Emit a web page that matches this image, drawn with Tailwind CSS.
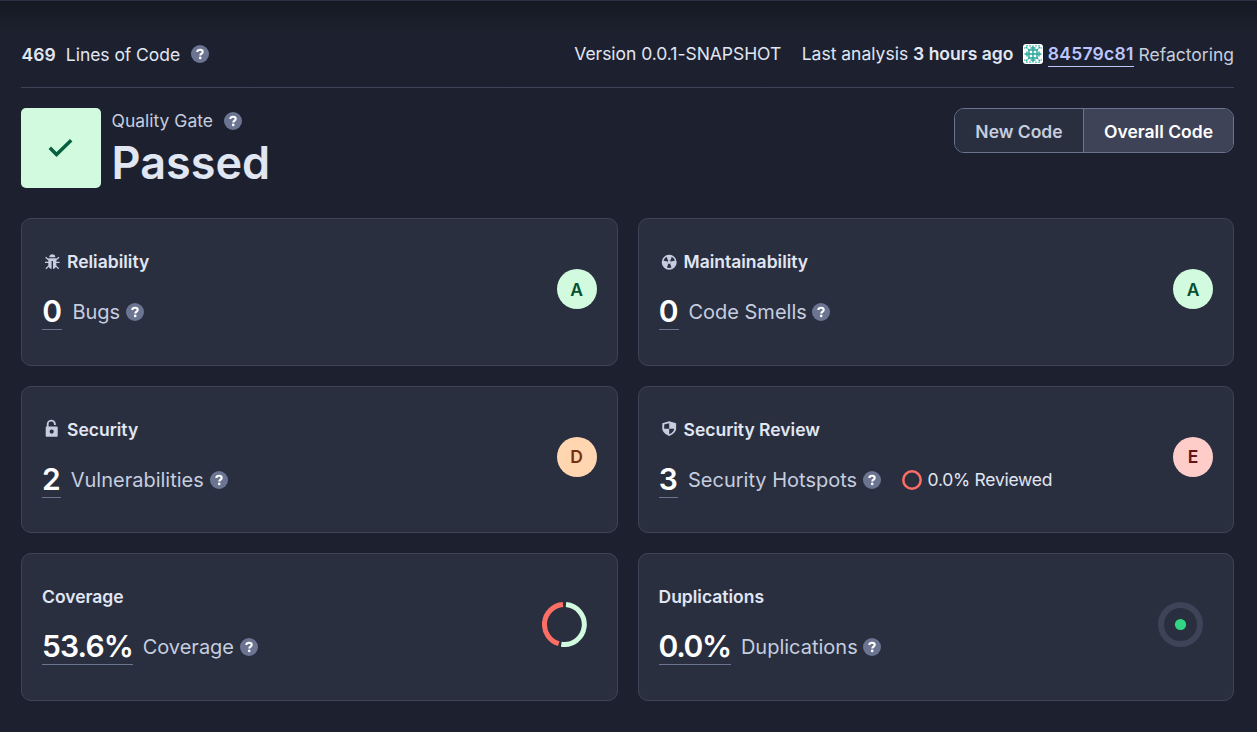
<!DOCTYPE html>
<html lang="en">
<head>
<meta charset="utf-8">
<title>Project overview</title>
<script src="https://cdn.jsdelivr.net/npm/@tailwindcss/browser@4"></script>
</head>
<body class="h-[732px] overflow-hidden bg-[#1d212f] font-['Inter',sans-serif] text-[17.5px] leading-[25px] text-[#e1e6f3]">
<svg class="hidden">
  <symbol id="help" viewBox="0 0 18 18"><circle cx="9" cy="9" r="9" fill="#6b7592"/><path d="M6.3 7.1C6.3 5.5 7.4 4.7 9 4.7s2.7.8 2.7 2.2c0 1.7-2.4 1.8-2.4 3.7" fill="none" stroke="#fff" stroke-width="2.1"/><circle cx="9.2" cy="12.9" r="1.3" fill="#fff"/></symbol>
</svg>
<div class="h-full border-t border-[#2a3146] bg-linear-to-b from-[#161922] to-[#1d212f] to-[32px] pl-[21px] pr-[23px]">
  <header class="flex h-[87px] items-center justify-between border-b border-[#3e4357] pt-[20px]">
    <div class="flex items-center">
      <span class="ml-[0.5px] font-semibold tracking-[0.1px]">469</span><span class="ml-[10px] tracking-[-0.05px]">Lines of Code</span>
      <svg class="ml-[10.500px] size-[18px]"><use href="#help"/></svg>
    </div>
    <div class="flex items-center whitespace-nowrap">
      <span class="mb-[2px] tracking-[-0.04px]">Version 0.0.1-SNAPSHOT</span>
      <span class="mb-[2px] ml-[20.500px]">Last analysis <b class="font-semibold">3 hours ago</b></span>
      <svg class="ml-[9.500px] size-[20px] rounded-[3px] bg-white" viewBox="0 0 20 20" fill="none" stroke="#26a69a"><path d="M6 6h8v8H6zM10 4.500v11M4.500 10h11" stroke-width="1.400"/><path d="M4 7.500v5M16 7.500v5M7.500 4h5M7.500 16h5M5 5l1 1M15 5l-1 1M5 15l1-1M15 15l-1-1M10 1.500v3M10 15.500v3M1.500 10h3M15.500 10h3" stroke-width="1.400"/><path d="M1 4h1.500M4 1v1.500M19 4h-1.500M16 1v1.500M1 16h1.500M4 19v-1.500M19 16h-1.500M16 19v-1.500M3 3l1.500 1.500M17 3l-1.500 1.500M3 17l1.500-1.500M17 17l-1.500-1.500M7 1v1.500M13 1v1.500M7 17.500V19M13 17.500V19" stroke-width="1.200"/></svg>
      <a class="mb-px ml-[5px] border-b border-[#bdc6ff] font-semibold tracking-[0.24px] text-[#bdc6ff]">84579c81</a>
      <span class="ml-[5px] text-[#c5cddf]">Refactoring</span>
    </div>
  </header>

  <section class="flex h-[130px] items-start justify-between pt-[20px]">
    <div class="flex">
      <div class="flex size-[80px] items-center justify-center rounded-[5px] bg-[#d1fadf]">
        <svg class="size-[26px]" viewBox="0 0 26 26"><path d="M1.800 12.800 8.500 19.500 23.200 5.300" fill="none" stroke="#056040" stroke-width="3.500"/></svg>
      </div>
      <div class="ml-[10.500px]">
        <div class="flex items-center text-[#c5cddf]">Quality Gate<svg class="ml-[10.500px] size-[18px]"><use href="#help"/></svg></div>
        <div class="text-[45px] leading-[60px] font-semibold">Passed</div>
      </div>
    </div>
    <div class="flex h-[45px] overflow-hidden rounded-[10px] border border-[#6b7592] font-semibold">
      <div class="flex w-[129px] items-center justify-center border-r border-[#6b7592] bg-[#2a2f40] pt-[2px] text-[#c5cddf]">New Code</div>
      <div class="flex w-[149px] items-center justify-center bg-[#3e4357] pt-[2px] text-white">Overall Code</div>
    </div>
  </section>

  <main class="grid auto-rows-[147.5px] grid-cols-2 gap-[20px]">
    <article class="flex justify-between rounded-[10px] border border-[#3e4357] bg-[#2a2f40] pl-[20px] pr-[20px]">
      <div class="pt-[30px]">
        <h2 class="flex h-[25px] items-center font-semibold"><svg class="mr-[5px] size-[20px]" viewBox="0 0 20 20" fill="#c5cddf"><path d="M7.300 5.300a3 3 0 0 1 6 0zM6.300 6.300h8v6.800c0 2-1 3.600-3.300 4V9H9.600v8.100C7.300 16.700 6.300 15.100 6.300 13.100z"/><path d="M3.600 5.200 6.800 8M17 5.200 13.800 8M3 10.300h4M17.600 10.300h-4M3.900 16.700l3.200-3.100M16.700 16.700l-3.200-3.100" stroke="#c5cddf" stroke-width="1.300"/></svg>Reliability</h2>
        <div class="mt-[17px] flex h-[39px] items-center"><a class="h-[39px] border-b border-[#6b7592] px-[0.3px] text-[30px] leading-[41px] font-semibold text-white">0</a><span class="mt-[4px] ml-[10px] text-[20px] text-[#c5cddf]">Bugs</span><svg class="mt-[2px] ml-[6px] size-[18px]"><use href="#help"/></svg></div>
      </div>
      <div class="mt-[50px] flex size-[40px] items-center justify-center rounded-full bg-[#d1fadf] font-semibold text-[#054f31]">A</div>
    </article>

    <article class="flex justify-between rounded-[10px] border border-[#3e4357] bg-[#2a2f40] pl-[20px] pr-[20px]">
      <div class="pt-[30px]">
        <h2 class="flex h-[25px] items-center font-semibold"><svg class="mr-[5px] size-[20px]" viewBox="0 0 20 20"><circle cx="10.200" cy="10.200" r="6.700" fill="none" stroke="#c5cddf" stroke-width="1.600"/><circle cx="10.200" cy="10.200" r="1.700" fill="#c5cddf"/><path d="M8.400 9.400 3.900 8.500A6.500 6.500 0 0 0 7.700 16.200L9.200 11.900zM12 9.400l4.500-.9a6.500 6.500 0 0 1-3.800 7.700l-1.500-4.300zM9 8.700 7.500 4.200a6.500 6.500 0 0 1 5.400 0L11.400 8.700z" fill="#c5cddf"/></svg>Maintainability</h2>
        <div class="mt-[17px] flex h-[39px] items-center"><a class="h-[39px] border-b border-[#6b7592] px-[0.3px] text-[30px] leading-[41px] font-semibold text-white">0</a><span class="mt-[4px] ml-[9.500px] text-[20px] text-[#c5cddf]">Code Smells</span><svg class="mt-[2px] ml-[5px] size-[18px]"><use href="#help"/></svg></div>
      </div>
      <div class="mt-[50px] flex size-[40px] items-center justify-center rounded-full bg-[#d1fadf] font-semibold text-[#054f31]">A</div>
    </article>

    <article class="flex justify-between rounded-[10px] border border-[#3e4357] bg-[#2a2f40] pl-[20px] pr-[20px]">
      <div class="pt-[30px]">
        <h2 class="flex h-[25px] items-center font-semibold"><svg class="mr-[5px] size-[20px]" viewBox="0 0 20 20"><path d="M5.700 8V5.500a3.600 3.600 0 0 1 7.200-.6v1" fill="none" stroke="#c5cddf" stroke-width="1.800"/><path fill-rule="evenodd" fill="#c5cddf" d="M4.700 7.500h10a1 1 0 0 1 1 1v8.300a1 1 0 0 1-1 1h-10a1 1 0 0 1-1-1V8.500a1 1 0 0 1 1-1zm5 3a2.100 2.100 0 1 0 0 4.200 2.100 2.100 0 1 0 0-4.200z"/></svg>Security</h2>
        <div class="mt-[17px] flex h-[39px] items-center"><a class="h-[39px] border-b border-[#6b7592] text-[30px] leading-[41px] font-semibold text-white">2</a><span class="mt-[4px] ml-[10px] text-[20px] text-[#c5cddf]">Vulnerabilities</span><svg class="mt-[3px] ml-[6px] size-[18px]"><use href="#help"/></svg></div>
      </div>
      <div class="mt-[50px] flex size-[40px] items-center justify-center rounded-full bg-[#ffd6af] font-semibold text-[#7a2e0e]">D</div>
    </article>

    <article class="flex justify-between rounded-[10px] border border-[#3e4357] bg-[#2a2f40] pl-[20px] pr-[20px]">
      <div class="pt-[30px]">
        <h2 class="flex h-[25px] items-center font-semibold"><svg class="mr-[5px] size-[20px]" viewBox="0 0 20 20"><path d="M10.200 2.300 3.300 4.300v5.300c0 3.300 2.900 5.800 6.900 7.400 4-1.600 6.900-4.100 6.900-7.400V4.300z" fill="#c5cddf"/><path d="M10.200 4.300v5.500H5.200V5.600zM10.200 9.800h5c0 2.200-2 4.200-5 5.500z" fill="#2a2f40"/></svg>Security Review</h2>
        <div class="mt-[17px] flex h-[39px] items-center"><a class="h-[39px] border-b border-[#6b7592] px-[0.2px] text-[30px] leading-[41px] font-semibold text-white">3</a><span class="mt-[4px] ml-[10px] text-[20px] text-[#c5cddf]">Security Hotspots</span><svg class="mt-[3px] ml-[6px] size-[18px]"><use href="#help"/></svg>
          <svg class="mt-[3px] ml-[21px] size-[20px]" viewBox="0 0 20 20"><circle cx="10" cy="10" r="8.700" fill="none" stroke="#fd6f65" stroke-width="2.500"/></svg><span class="mt-[2px] ml-[5.500px] tracking-[-0.27px]">0.0% Reviewed</span></div>
      </div>
      <div class="mt-[50px] flex size-[40px] items-center justify-center rounded-full bg-[#fecdca] font-semibold text-[#651212]">E</div>
    </article>

    <article class="flex justify-between rounded-[10px] border border-[#3e4357] bg-[#2a2f40] pl-[20px] pr-[30px]">
      <div class="pt-[30px]">
        <h2 class="flex h-[25px] items-center font-semibold">Coverage</h2>
        <div class="mt-[17px] flex h-[39px] items-center"><a class="h-[39px] border-b border-[#6b7592] text-[30px] leading-[41px] font-semibold tracking-[-0.850px] text-white">53.6%</a><span class="mt-[4px] ml-[9.500px] text-[20px] text-[#c5cddf]">Coverage</span><svg class="mt-[2px] ml-[6px] size-[18px]"><use href="#help"/></svg></div>
      </div>
      <svg class="mt-[48px] size-[45px]" viewBox="0 0 45 45" fill="none" stroke-width="5"><path d="M24 2.550A20 20 0 1 1 19.300 42.250" stroke="#d1fadf"/><path d="M16.800 41.680A20 20 0 0 1 21 2.550" stroke="#fd6f65"/></svg>
    </article>

    <article class="flex justify-between rounded-[10px] border border-[#3e4357] bg-[#2a2f40] pl-[20px] pr-[30px]">
      <div class="pt-[30px]">
        <h2 class="flex h-[25px] items-center font-semibold">Duplications</h2>
        <div class="mt-[17px] flex h-[39px] items-center"><a class="h-[39px] border-b border-[#6b7592] text-[30px] leading-[41px] font-semibold tracking-[-1.300px] text-white">0.0%</a><span class="mt-[4px] ml-[10px] text-[20px] text-[#c5cddf]">Duplications</span><svg class="mt-[2px] ml-[5.500px] size-[18px]"><use href="#help"/></svg></div>
      </div>
      <svg class="mt-[48px] size-[45px]" viewBox="0 0 45 45"><circle cx="22.500" cy="22.500" r="19.500" fill="none" stroke="#3e4357" stroke-width="6"/><circle cx="22.500" cy="22.500" r="5.600" fill="#32d583"/></svg>
    </article>
  </main>
</div>
</body>
</html>
